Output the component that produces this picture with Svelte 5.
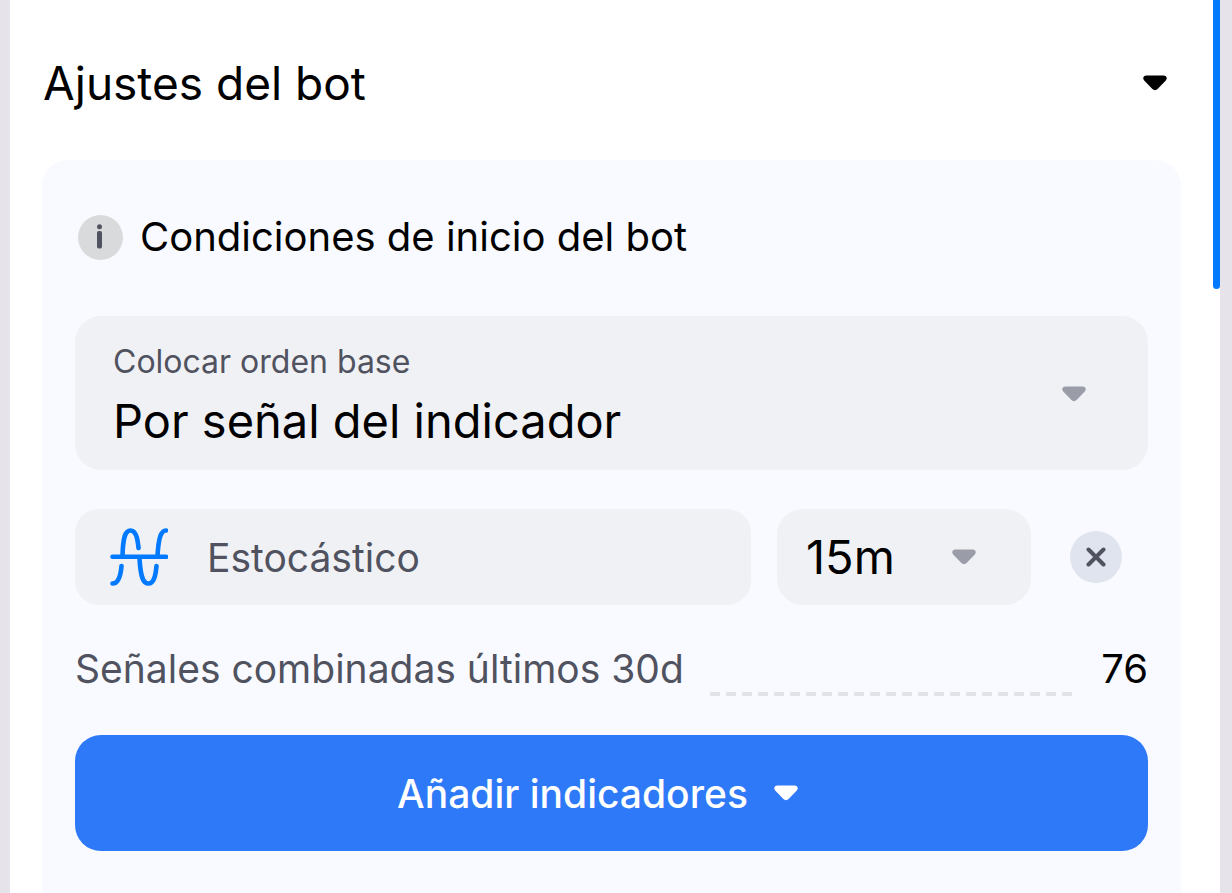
<script>
	let open = $state(true);
	let startMode = $state('signal');
	let timeframe = $state('15m');
	let hasIndicator = $state(true);
	let signals = $state(76);
</script>

{#snippet caret()}
  <svg class="caret" viewBox="0 0 24 16" aria-hidden="true">
    <path d="M3.500 0.500h17c3 0 4.300 3 2.300 5l-8.200 8.600c-1.500 1.500-3.700 1.500-5.200 0L1.200 5.500c-2-2-.7-5 2.300-5z" />
  </svg>
{/snippet}

<main class="panel">
  <div class="scroll-thumb"></div>

  <h1>
    <button class="toggle" type="button" aria-expanded={open} onclick={() => (open = !open)}>
      <span>Ajustes del bot</span>
      {@render caret()}
    </button>
  </h1>

  {#if open}
    <section class="card">
      <h2>
        <svg class="info" viewBox="0 0 46 46" aria-hidden="true">
          <circle cx="22.500" cy="23.500" r="22.500" fill="#d9dadc" />
          <circle cx="21.500" cy="12.800" r="2.500" fill="#50535f" />
          <rect x="19" y="17" width="5" height="17.500" rx="1.800" fill="#50535f" />
        </svg>
        Condiciones de inicio del bot
      </h2>

      <div class="field">
        <div class="field-body">
          <label for="start-mode">Colocar orden base</label>
          <select id="start-mode" bind:value={startMode}>
            <option value="signal">Por señal del indicador</option>
          </select>
        </div>
        {@render caret()}
      </div>

      {#if hasIndicator}
        <div class="indicator">
          <div class="indicator-name">
            <svg class="wave" viewBox="0 0 58 58" aria-hidden="true">
              <path d="M2.500 28.800H56M12.500 28C13 10 15 2.500 20.500 2.500C25.500 2.500 27.500 9 28.500 20M47.500 28C48.500 10 51 2.500 56 2.500M2.500 55.500C8 55.500 10.500 50 11.500 38M29.500 30C30.500 49 33 55.500 38.500 55.500C43.500 55.500 45.500 49 46.500 38" />
            </svg>
            <span>Estocástico</span>
          </div>
          <div class="timeframe">
            <select aria-label="Intervalo" bind:value={timeframe}>
              <option value="15m">15m</option>
            </select>
            {@render caret()}
          </div>
          <button class="remove" type="button" aria-label="Eliminar" onclick={() => (hasIndicator = false)}>
            <svg viewBox="0 0 20 20" aria-hidden="true">
              <path d="M2.500 2.500L17.500 17.500M17.500 2.500L2.500 17.500" />
            </svg>
          </button>
        </div>
      {/if}

      <div class="stats">
        <span>Señales combinadas últimos 30d</span>
        <span class="leader"></span>
        <span class="total">{signals}</span>
      </div>

      <button class="add" type="button" onclick={() => (hasIndicator = true)}>
        <span>Añadir indicadores</span>
        {@render caret()}
      </button>
    </section>
  {/if}
</main>

<style>
:global(body) {
    background: #fff;
}
.panel, .panel * {
    box-sizing: border-box;
}
.panel {
    position: relative;
    display: flex;
    flex-direction: column;
    min-height: 100vh;
    padding: 0 39px 0 32px;
    border-left: 10px solid #e6e3ea;
    border-right: 12px solid #e6e3ea;
    background: #fff;
    color: #000;
    font-family: Inter, "Liberation Sans", sans-serif;
}
.scroll-thumb {
    position: absolute;
    top: 0;
    right: 0;
    width: 7px;
    height: 289px;
    border-radius: 0 0 4px 4px;
    background: #017aff;
}
button, select {
    font-family: inherit;
    color: inherit;
    border: none;
    padding: 0;
    margin: 0;
    background: none;
    cursor: pointer;
}
h1, h2 {
    margin: 0;
    font-weight: 400;
}
.toggle {
    display: flex;
    align-items: center;
    justify-content: space-between;
    width: 100%;
    padding: 55px 14px 49px 1px;
    font-size: 46px;
    line-height: 56px;
}
.caret {
    flex: none;
    width: 24px;
    height: 16px;
    fill: currentColor;
}
.card {
    flex: 1;
    padding: 53px 33px 42px;
    border-radius: 26px 26px 0 0;
    background: #f9faff;
}
h2 {
    display: flex;
    align-items: center;
    gap: 16px;
    padding-left: 3px;
    font-size: 40px;
    line-height: 48px;
}
.info {
    flex: none;
    width: 46px;
    height: 46px;
}
.field {
    display: flex;
    align-items: center;
    margin-top: 55px;
    padding: 23px 62px 21px 38px;
    border-radius: 26px;
    background: #f0f1f5;
}
.field-body {
    flex: 1;
    display: flex;
    flex-direction: column;
    gap: 8px;
}
.field label {
    color: #50535f;
    font-size: 32px;
    line-height: 46px;
}
select {
    appearance: none;
    font-size: 47px;
    line-height: 56px;
}
.field .caret, .timeframe .caret {
    color: #9a9da8;
}
.indicator {
    display: flex;
    align-items: center;
    margin-top: 39px;
    padding-right: 26px;
}
.indicator-name {
    flex: 1;
    display: flex;
    align-items: center;
    gap: 39px;
    height: 96px;
    padding: 0 35px;
    border-radius: 24px;
    background: #f0f1f5;
    color: #50535f;
    font-size: 39px;
}
.wave {
    flex: none;
    width: 58px;
    height: 58px;
    fill: none;
    stroke: #017aff;
    stroke-width: 4.600;
    stroke-linecap: round;
}
.timeframe {
    display: flex;
    align-items: center;
    width: 254px;
    height: 96px;
    margin: 0 39px 0 26px;
    padding: 0 55px 0 29px;
    border-radius: 26px;
    background: #f0f1f5;
}
.timeframe select {
    flex: 1;
    min-width: 0;
}
.remove {
    display: flex;
    align-items: center;
    justify-content: center;
    width: 52px;
    height: 52px;
    border-radius: 50%;
    background: #dfe4ee;
}
.remove svg {
    width: 20px;
    height: 20px;
    stroke: #50535f;
    stroke-width: 4;
    stroke-linecap: round;
}
.stats {
    display: flex;
    gap: 26px;
    margin: 40px 0 39px;
    height: 51px;
    color: #50535f;
    font-size: 39px;
    line-height: 48px;
}
.leader {
    flex: 1;
    align-self: flex-end;
    height: 4px;
    background: repeating-linear-gradient(90deg, #e2e3e8 0 10px, transparent 10px 16px);
}
.total {
    color: #000;
    font-size: 40px;
}
.add {
    display: flex;
    align-items: center;
    justify-content: center;
    gap: 26px;
    width: 100%;
    height: 116px;
    padding-right: 28px;
    border-radius: 26px;
    background: #2e79f7;
    color: #fff;
    font-size: 39px;
    font-weight: 500;
}
</style>
